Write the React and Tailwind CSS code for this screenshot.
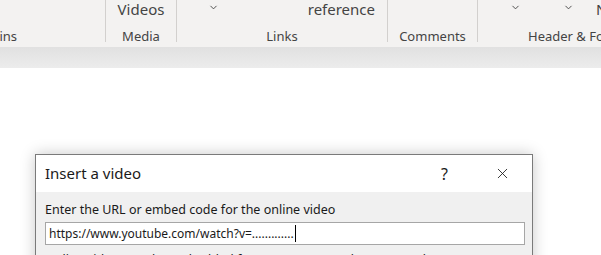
import { ChevronDown, X } from "lucide-react";

const font = { fontFamily: '"Noto Sans", "Open Sans", sans-serif' };

function Chevron() {
  return <ChevronDown className="h-[11px] w-[11px] text-[#444]" strokeWidth={2} />;
}

export default function App() {
  return (
    <div className="h-[255px] w-[601px] overflow-hidden bg-white" style={font}>
      {/* ribbon */}
      <div className="flex h-[47px] bg-[#f3f2f1] text-[#444]">
        <div className="mb-[5px] flex w-[106px] shrink-0 flex-col overflow-hidden border-r border-[#d2d0ce]">
          <div className="h-[32px]" />
          <div className="-ml-[29px] whitespace-nowrap text-[13px] leading-[12px]">Add-ins</div>
        </div>
        <div className="mb-[5px] flex w-[71px] shrink-0 flex-col items-center border-r border-[#d2d0ce]">
          <div className="h-[32px] text-[15px] leading-[18px]">Videos</div>
          <div className="text-[13px] leading-[12px]">Media</div>
        </div>
        <div className="mb-[5px] flex w-[211px] shrink-0 flex-col border-r border-[#d2d0ce]">
          <div className="flex h-[32px] items-start justify-between pl-[31px] pr-[12px]">
            <span className="pt-[2px]"><Chevron /></span>
            <span className="text-[15px] leading-[18px]">reference</span>
          </div>
          <div className="text-center text-[13px] leading-[12px]">Links</div>
        </div>
        <div className="mb-[5px] flex w-[90px] shrink-0 flex-col items-center border-r border-[#d2d0ce]">
          <div className="h-[32px]" />
          <div className="text-[13px] leading-[12px]">Comments</div>
        </div>
        <div className="mb-[5px] flex min-w-0 flex-1 flex-col overflow-hidden">
          <div className="flex h-[32px] items-start pl-[32px]">
            <span className="pt-[2px]"><Chevron /></span>
            <span className="ml-[42px] pt-[2px]"><Chevron /></span>
            <span className="ml-[22px] text-[15px] leading-[18px]">N</span>
          </div>
          <div className="whitespace-nowrap pl-[50px] text-[13px] leading-[12px]">Header &amp; Footer</div>
        </div>
      </div>
      <div className="h-[21px] bg-gradient-to-b from-[#e1e1e1] to-[#ececec]" />

      {/* dialog */}
      <div className="ml-[35px] mt-[86px] w-[498px] border border-[#7a7a7a] bg-[#f0f0f0] shadow-[0_0_14px_rgba(0,0,0,0.22)]">
        <div className="flex h-[37px] items-center bg-white pl-[9px] pr-[21px] text-[#1a1a1a]">
          <span className="flex-1 text-[15px]">Insert a video</span>
          <span className="mr-[46px] text-[16px]">?</span>
          <X className="h-[17px] w-[17px]" strokeWidth={1.2} />
        </div>
        <div className="pl-[9px] pr-[7px] pt-[9px]">
          <div className="text-[12.5px] leading-[18px] text-[#1a1a1a]">
            Enter the URL or embed code for the online video
          </div>
          <div className="mt-[3px] flex h-[23px] items-center border border-[#a6a6a6] bg-white pl-[3px] text-[12px] text-[#1a1a1a]">
            https://www.youtube.com/watch?v=.............
            <span className="ml-[1px] h-[17px] w-[1px] bg-black" />
          </div>
          <div className="mt-[6px] text-[12.5px] leading-[18px] text-[#1a1a1a]">
            Online videos can be embedded from any supported source, such as
          </div>
        </div>
      </div>
    </div>
  );
}
